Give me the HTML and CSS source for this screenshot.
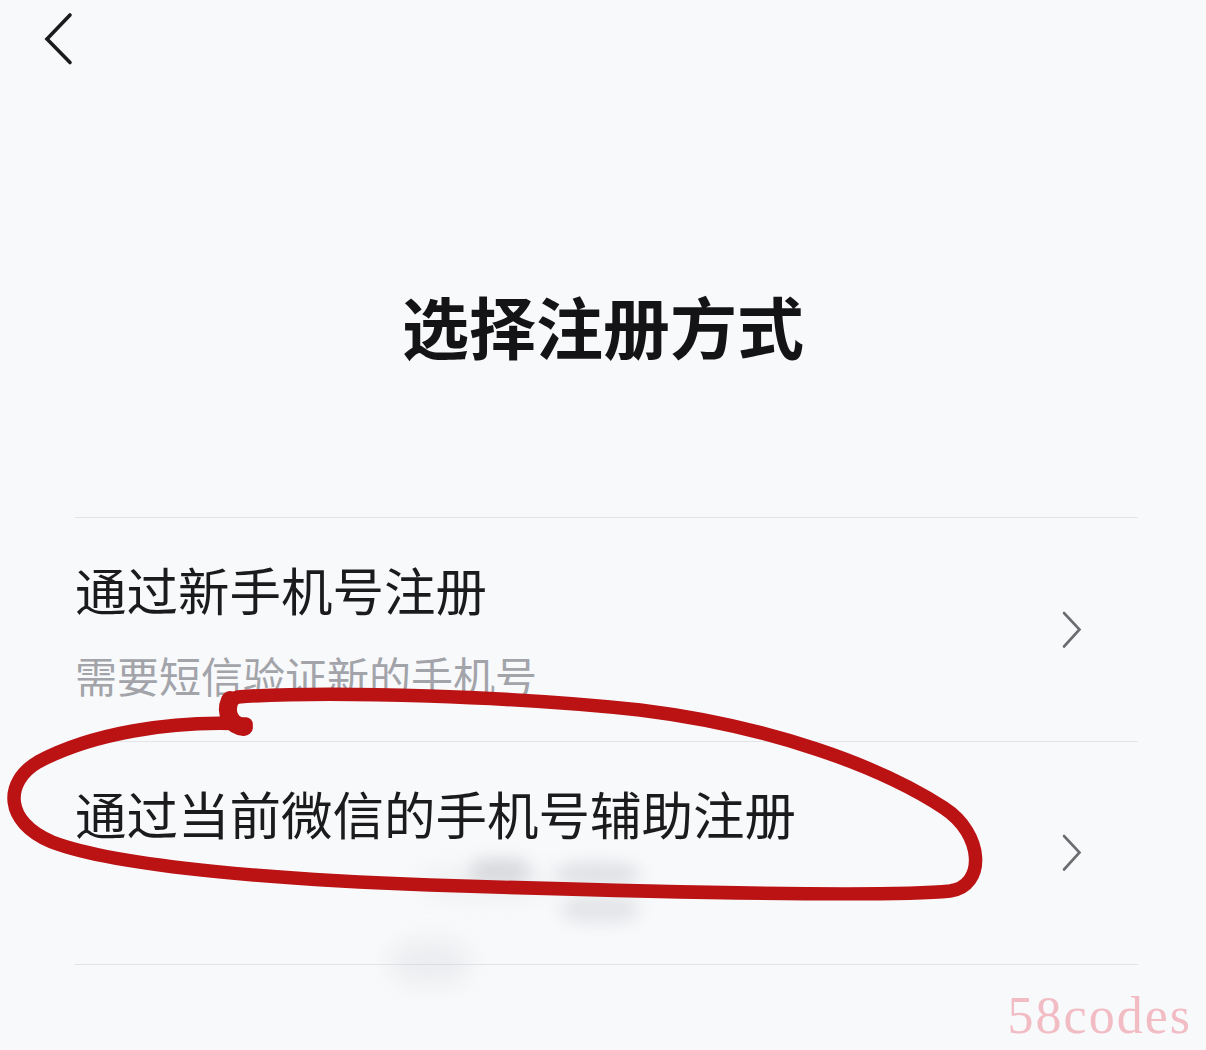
FILE: index.html
```html
<!DOCTYPE html>
<html lang="zh-CN">
<head>
<meta charset="utf-8">
<title>选择注册方式</title>
<link rel="stylesheet" href="styles.css">
</head>
<body>
<div class="page">
  <header class="topbar">
    <svg class="back" width="40" height="60" viewBox="0 0 40 60" aria-hidden="true">
      <path d="M30 5 L7 29 L30 52.5" fill="none" stroke="#1b1b1d" stroke-width="3.6" stroke-linecap="round" stroke-linejoin="miter"/>
    </svg>
  </header>

  <h1 class="title">选择注册方式</h1>

  <ul class="options">
    <li class="option">
      <div class="texts">
        <div class="opt-title">通过新手机号注册</div>
        <div class="opt-sub">需要短信验证新的手机号</div>
      </div>
      <svg class="chev" width="24" height="40" viewBox="0 0 24 40" aria-hidden="true">
        <path d="M5 3 L20.5 19.5 L5 36.5" fill="none" stroke="#6b6c70" stroke-width="2.6" stroke-linecap="round"/>
      </svg>
    </li>
    <li class="option">
      <div class="texts">
        <div class="opt-title">通过当前微信的手机号辅助注册</div>
        <div class="opt-sub blank"></div>
      </div>
      <svg class="chev" width="24" height="40" viewBox="0 0 24 40" aria-hidden="true">
        <path d="M5 3 L20.5 19.5 L5 36.5" fill="none" stroke="#6b6c70" stroke-width="2.6" stroke-linecap="round"/>
      </svg>
    </li>
  </ul>

  <div class="smudge s1"></div>
  <div class="smudge s2"></div>
  <div class="smudge s3"></div>
  <div class="smudge s4"></div>
  <div class="smudge s5"></div>

  <svg class="mark" width="1206" height="1050" viewBox="0 0 1206 1050" aria-hidden="true">
    <path d="M246 724 C226 726 222 702 238 697 C330 690 520 697 640 710 C770 726 880 766 944 808 C984 834 986 886 950 891 C880 898 620 891 430 885 C290 880 120 868 52 842 C4 822 4 782 38 762 C90 734 170 720 246 724 Z"
      fill="none" stroke="#bb1214" stroke-width="13.5" stroke-linejoin="round" stroke-linecap="round"/>
    <path d="M230 700 C224 714 232 726 244 727" fill="none" stroke="#bb1214" stroke-width="18" stroke-linecap="round"/>
  </svg>

  <div class="watermark">58codes</div>
</div>
</body>
</html>
```

FILE: styles.css
```css
* { box-sizing: border-box; }
html, body {
  margin: 0;
  padding: 0;
  background: #f8f9fb;
}
body {
  font-family: "Noto Sans CJK SC", "Noto Sans", sans-serif;
  color: #1b1b1d;
}
.page {
  position: relative;
  width: 1206px;
  height: 1050px;
  overflow: hidden;
}
.topbar {
  height: 80px;
  padding: 10px 0 0 40px;
}
.back { display: block; }

.title {
  margin: 205px 0 0;
  text-align: center;
  font-size: 67px;
  line-height: 80px;
  font-weight: 700;
  color: #141416;
}

.options {
  list-style: none;
  margin: 152px 68px 0 75px;
  padding: 0;
}
.option {
  display: flex;
  align-items: center;
  justify-content: space-between;
  height: 224px;
  border-top: 1px solid #e2e4e8;
  padding-right: 55px;
}
.option:last-child {
  border-bottom: 1px solid #e2e4e8;
}
.texts {
  display: flex;
  flex-direction: column;
  gap: 29px;
}
.opt-title {
  font-size: 51.5px;
  line-height: 62px;
  font-weight: 400;
  color: #1b1b1d;
}
.opt-sub {
  font-size: 42px;
  line-height: 52px;
  color: #a2a4aa;
  font-weight: 400;
}
.opt-sub.blank { height: 52px; }
.chev { display: block; }

.smudge {
  position: absolute;
  border-radius: 40%;
  background: #a9abb0;
  filter: blur(8px);
}
.s1 { left: 470px; top: 858px; width: 60px; height: 26px; opacity: 0.35; }
.s2 { left: 555px; top: 862px; width: 85px; height: 24px; opacity: 0.3; }
.s3 { left: 560px; top: 895px; width: 80px; height: 28px; opacity: 0.25; }
.s4 { left: 390px; top: 940px; width: 80px; height: 45px; opacity: 0.15; filter: blur(12px); }
.s5 { left: 420px; top: 868px; width: 130px; height: 30px; opacity: 0.12; filter: blur(12px); }

.mark {
  position: absolute;
  left: 0;
  top: 0;
  pointer-events: none;
}
.watermark {
  position: absolute;
  right: 14px;
  bottom: 4px;
  font-family: "Liberation Serif", serif;
  font-size: 52px;
  line-height: 60px;
  letter-spacing: 2px;
  color: #f2bcc4;
}
```
